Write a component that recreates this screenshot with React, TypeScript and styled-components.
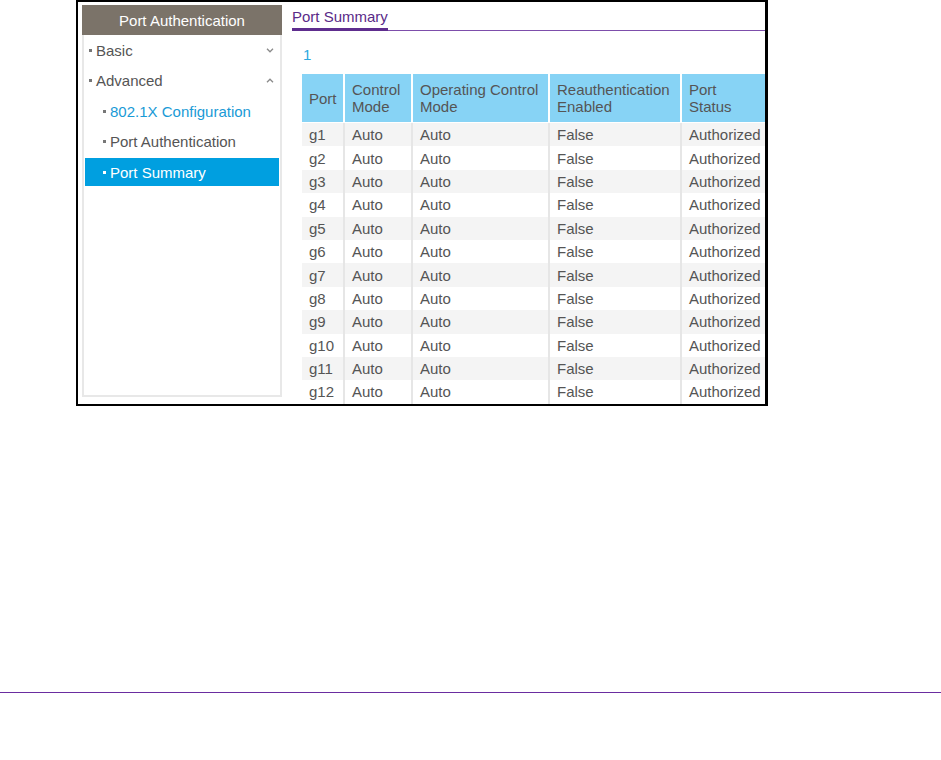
import styled, { createGlobalStyle } from "styled-components";

const GlobalStyle = createGlobalStyle`
  body {
    margin: 0;
    background: #ffffff;
    font-family: "Liberation Sans", Arial, sans-serif;
  }
`;

const Page = styled.div`
  width: 941px;
  display: flex;
  flex-direction: column;
`;

const Frame = styled.div`
  margin-left: 76px;
  width: 692px;
  height: 406px;
  box-sizing: border-box;
  border: 2px solid #000000;
  border-right-width: 3px;
  padding: 3px 0 0 4px;
  display: flex;
  align-items: flex-start;
  overflow: hidden;
`;

const Sidebar = styled.div`
  width: 200px;
  height: 392px;
  flex-shrink: 0;
  display: flex;
  flex-direction: column;
`;

const SideHeader = styled.div`
  height: 30px;
  background: #7b7369;
  color: #ffffff;
  font-size: 15px;
  display: flex;
  align-items: center;
  justify-content: center;
`;

const Menu = styled.div`
  flex: 1;
  border: 2px solid #e8e8e8;
  border-top: none;
  padding: 1px 1px 0 1px;
  display: flex;
  flex-direction: column;
  gap: 2.6px;
`;

const MenuItem = styled.div<{ $level: number; $active?: boolean; $link?: boolean }>`
  height: 28px;
  display: flex;
  align-items: center;
  padding-left: ${(p) => (p.$level === 0 ? 4 : 18)}px;
  padding-right: 4px;
  font-size: 15px;
  background: ${(p) => (p.$active ? "#009fe0" : "transparent")};
  color: ${(p) => (p.$active ? "#ffffff" : p.$link ? "#1a9ad6" : "#555555")};

  &::before {
    content: "";
    width: 3px;
    height: 3px;
    margin-right: 4px;
    background: ${(p) => (p.$active ? "#ffffff" : "#777777")};
  }
`;

const ItemLabel = styled.span`
  flex: 1;
`;

const Chevron = ({ up }: { up?: boolean }) => (
  <svg width="8" height="5" viewBox="0 0 8 5" style={{ marginRight: 1 }}>
    <path
      d={up ? "M1 4.2 L4 1.2 L7 4.2" : "M1 0.8 L4 3.8 L7 0.8"}
      fill="none"
      stroke="#8a8a8a"
      strokeWidth="1.3"
    />
  </svg>
);

const Main = styled.div`
  flex: 1;
  min-width: 0;
  padding-left: 10px;
  display: flex;
  flex-direction: column;
`;

const TabBar = styled.div`
  display: flex;
  border-bottom: 1px solid #7d4eab;
`;

const Tab = styled.div`
  padding: 3px 0 3px;
  line-height: 17px;
  font-size: 15px;
  color: #5a2a88;
  border-bottom: 3px solid #5e2d8e;
  margin-bottom: -1px;
`;

const Pager = styled.div`
  padding: 15px 0 10px 11px;
  line-height: 18px;
  font-size: 15px;
  color: #2aa8e0;
`;

const Table = styled.table`
  margin-left: 10px;
  width: 520px;
  table-layout: fixed;
  border-collapse: separate;
  border-spacing: 0;
  font-size: 15px;
  color: #555555;
`;

const Th = styled.th`
  background: #87d3f5;
  font-weight: normal;
  text-align: left;
  vertical-align: middle;
  line-height: 17px;
  padding: 7px 6px 7px 7px;
  border-right: 2px solid #ffffff;
  border-bottom: 1px solid #ffffff;
  white-space: nowrap;
`;

const Row = styled.tr<{ $odd: boolean }>`
  height: 23.4px;
  background: ${(p) => (p.$odd ? "#f4f4f4" : "#ffffff")};
`;

const Td = styled.td`
  padding: 0 6px 0 7px;
  line-height: 17px;
  border-right: 2px solid #e6e6e6;
  white-space: nowrap;
`;

const Divider = styled.div`
  margin-top: 286px;
  height: 1px;
  background: #6a2da0;
`;

const ports = Array.from({ length: 12 }, (_, i) => `g${i + 1}`);

export default function App() {
  return (
    <>
      <GlobalStyle />
      <Page>
        <Frame>
          <Sidebar>
            <SideHeader>Port Authentication</SideHeader>
            <Menu>
              <MenuItem $level={0}>
                <ItemLabel>Basic</ItemLabel>
                <Chevron />
              </MenuItem>
              <MenuItem $level={0}>
                <ItemLabel>Advanced</ItemLabel>
                <Chevron up />
              </MenuItem>
              <MenuItem $level={1} $link>
                <ItemLabel>802.1X Configuration</ItemLabel>
              </MenuItem>
              <MenuItem $level={1}>
                <ItemLabel>Port Authentication</ItemLabel>
              </MenuItem>
              <MenuItem $level={1} $active>
                <ItemLabel>Port Summary</ItemLabel>
              </MenuItem>
            </Menu>
          </Sidebar>
          <Main>
            <TabBar>
              <Tab>Port Summary</Tab>
            </TabBar>
            <Pager>1</Pager>
            <Table>
              <colgroup>
                <col style={{ width: 43 }} />
                <col style={{ width: 68 }} />
                <col style={{ width: 137 }} />
                <col style={{ width: 132 }} />
                <col style={{ width: 140 }} />
              </colgroup>
              <thead>
                <tr>
                  <Th>Port</Th>
                  <Th>
                    Control
                    <br />
                    Mode
                  </Th>
                  <Th>
                    Operating Control
                    <br />
                    Mode
                  </Th>
                  <Th>
                    Reauthentication
                    <br />
                    Enabled
                  </Th>
                  <Th>
                    Port
                    <br />
                    Status
                  </Th>
                </tr>
              </thead>
              <tbody>
                {ports.map((port, i) => (
                  <Row key={port} $odd={i % 2 === 0}>
                    <Td>{port}</Td>
                    <Td>Auto</Td>
                    <Td>Auto</Td>
                    <Td>False</Td>
                    <Td>Authorized</Td>
                  </Row>
                ))}
              </tbody>
            </Table>
          </Main>
        </Frame>
        <Divider />
      </Page>
    </>
  );
}
